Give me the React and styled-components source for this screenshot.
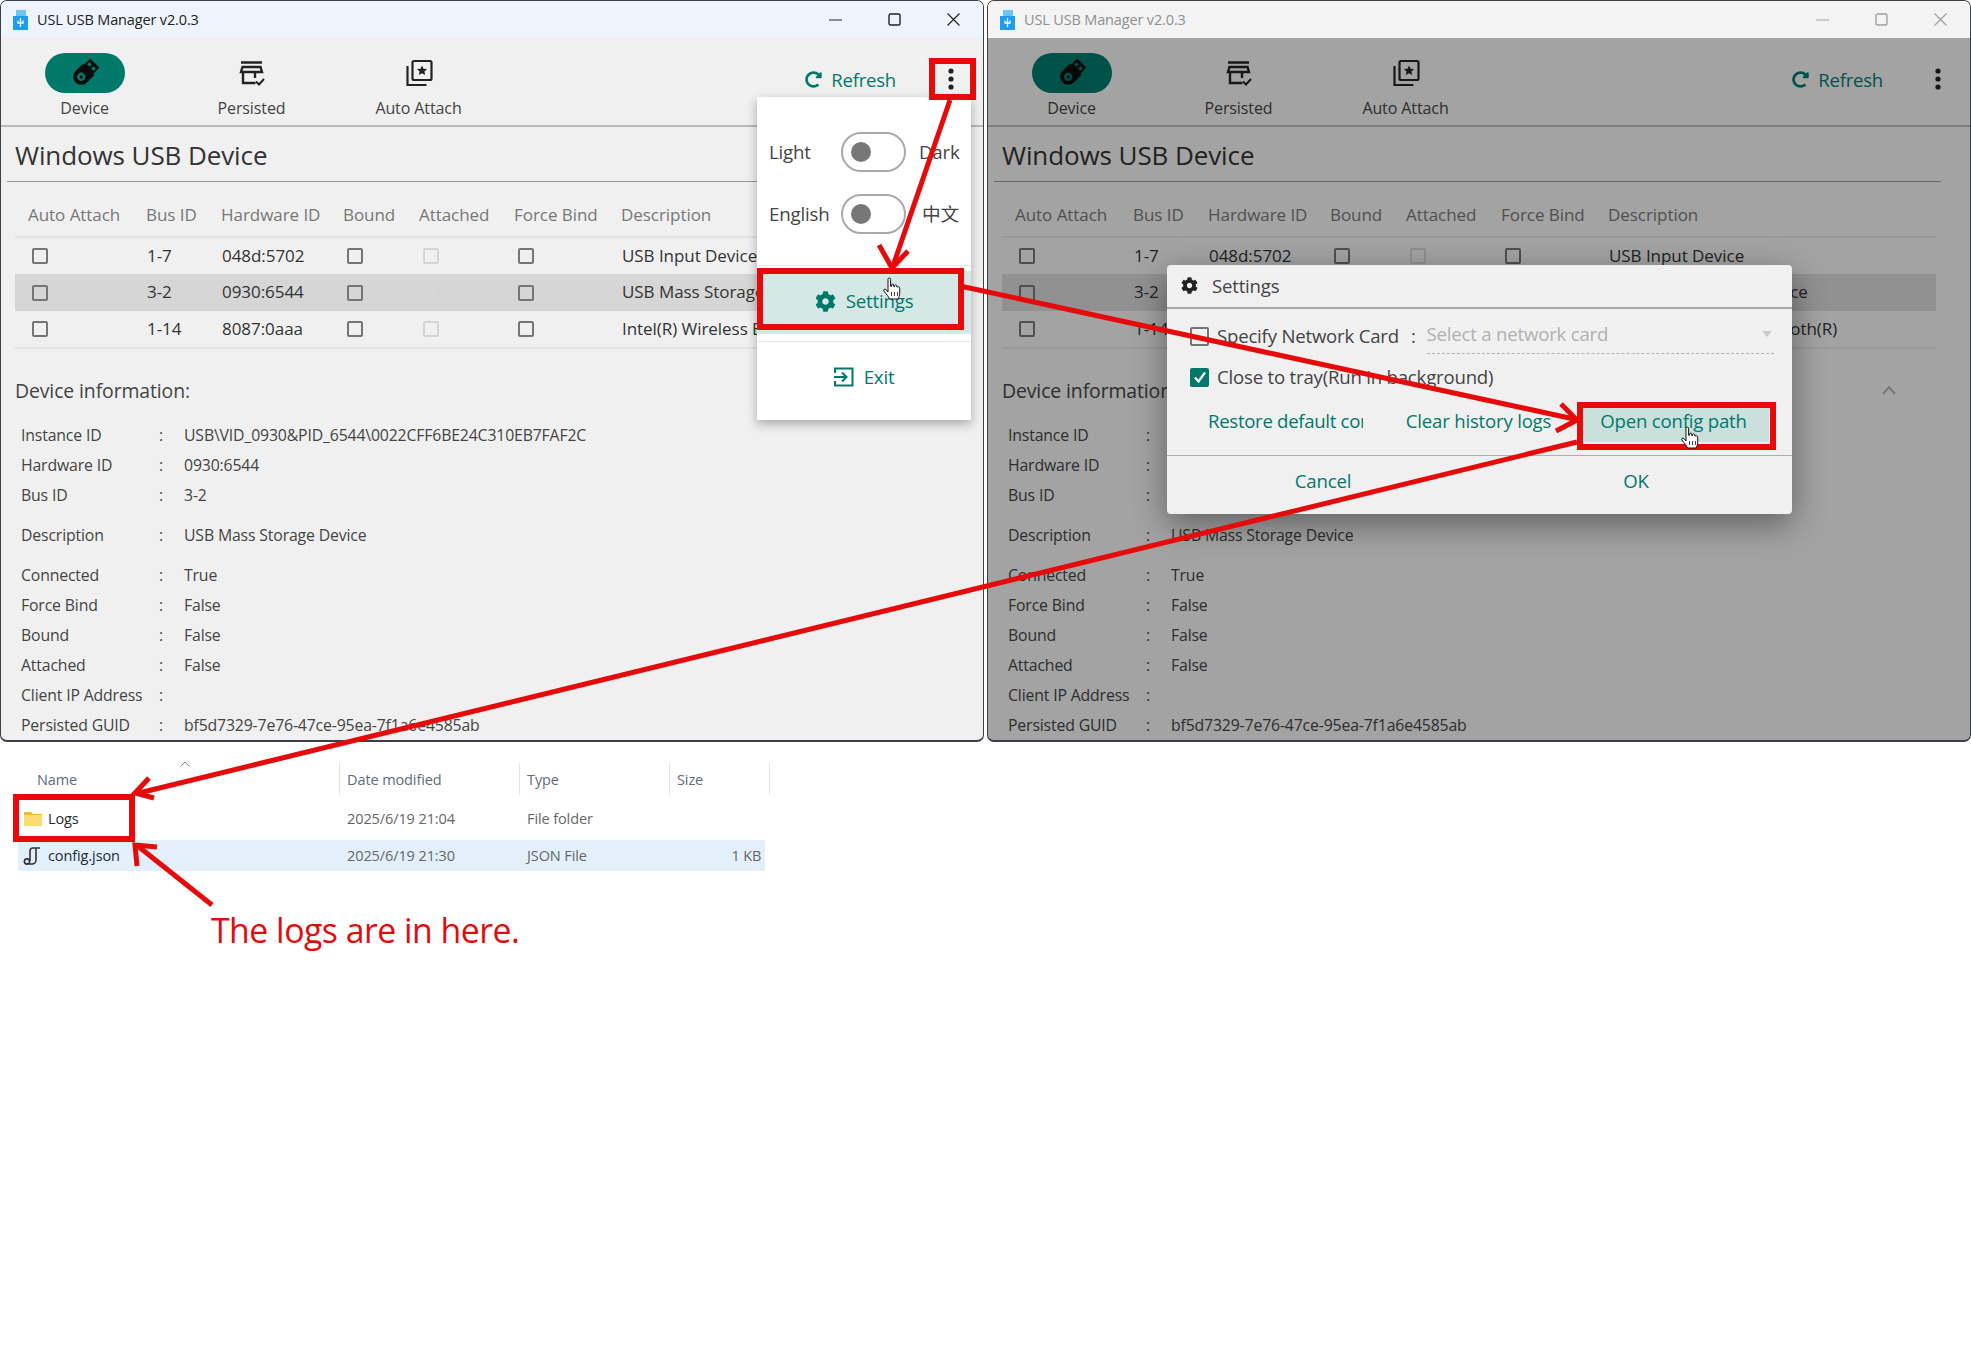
import React from 'react';
import styled, { createGlobalStyle } from 'styled-components';
import { FaCog, FaRedoAlt } from 'react-icons/fa';

const Global = createGlobalStyle`
  html, body { margin: 0; padding: 0; background: #fff; }
  body { font-family: "Open Sans", "Noto Sans CJK SC", sans-serif; color: #333; }
  * { box-sizing: border-box; }
`;

const TEAL = '#00796b';

const Page = styled.div`
  position: relative;
  width: 1971px;
  height: 1354px;
  overflow: hidden;
  background: #fff;
`;
const TopRow = styled.div`
  display: flex;
  gap: 3px;
  height: 742px;
`;
const Win = styled.section`
  position: relative;
  width: 984px;
  height: 742px;
  background: #f0f0f0;
  border: solid #3c3f46;
  border-width: 1px 1px 2px 1px;
  border-radius: 7px;
  overflow: hidden;
  flex: none;
`;
const TitleBar = styled.header`
  display: flex;
  align-items: center;
  height: 37px;
  padding-left: 12px;
  background: ${p => (p.$inactive ? '#f3f3f3' : '#eff3fb')};
  color: ${p => (p.$inactive ? '#8f8f8f' : '#222')};
  font-size: 14.5px;
  letter-spacing: -0.15px;
`;
const AppTitle = styled.span`
  margin-left: 8px;
`;
const WinButtons = styled.div`
  margin-left: auto;
  display: flex;
  color: ${p => (p.$inactive ? '#a0a0a0' : '#222')};
`;
const WinButton = styled.span`
  display: flex;
  align-items: center;
  justify-content: center;
  width: 59px;
  height: 37px;
`;
const Toolbar = styled.nav`
  display: flex;
  height: 89px;
  border-bottom: 2px solid #b9b9b9;
  position: relative;
`;
const NavItem = styled.div`
  width: 167px;
  display: flex;
  flex-direction: column;
  align-items: center;
  padding-top: 15px;
  font-size: 16px;
  color: #444;
  letter-spacing: -0.1px;
`;
const NavIcon = styled.span`
  display: flex;
  align-items: center;
  justify-content: center;
  width: 80px;
  height: 40px;
  border-radius: 20px;
  background: ${p => (p.$active ? TEAL : 'transparent')};
  margin-bottom: 4px;
`;
const ToolEnd = styled.div`
  margin-left: auto;
  display: flex;
  align-items: center;
  padding: 0 29px 5px 0;
  color: ${TEAL};
  font-size: 18.5px;
  letter-spacing: -0.2px;
`;
const RefreshLabel = styled.span`
  margin: 0 52px 0 9px;
`;
const Heading = styled.h1`
  margin: 0 29px 0 6px;
  padding: 0 0 9px 8px;
  height: 55px;
  display: flex;
  align-items: flex-end;
  font-size: 26px;
  font-weight: 400;
  line-height: 34px;
  color: #333;
  letter-spacing: -0.1px;
  border-bottom: 1px solid #999;
`;
const Table = styled.div`
  margin: 0 34px 0 14px;
  font-size: 17px;
  letter-spacing: -0.05px;
`;
const columns = '118px 75px 122px 76px 95px 107px 1fr';
const HeadRow = styled.div`
  display: grid;
  grid-template-columns: ${columns};
  height: 56px;
  padding-top: 14px;
  align-items: center;
  color: #777;
  border-bottom: 2px solid #e3e3e3;
`;
const HeadCell = styled.div`
  padding-left: 13px;
  height: 34px;
  white-space: nowrap;
  line-height: 32px;
`;
const Row = styled.div`
  display: grid;
  grid-template-columns: ${columns};
  height: ${p => p.$h}px;
  align-items: center;
  color: #333;
  background: ${p => (p.$selected ? '#d6d6d6' : 'transparent')};
  border-bottom: ${p => (p.$last ? '2px solid #e3e3e3' : 'none')};
`;
const Cell = styled.div`
  padding-left: ${p => (p.$box ? 17 : 14)}px;
  padding-bottom: ${p => (p.$box ? 0 : 2)}px;
  white-space: nowrap;
  display: flex;
  align-items: center;
`;
const Box = styled.span`
  display: block;
  flex: none;
  width: ${p => p.$size || 16}px;
  height: ${p => p.$size || 16}px;
  border-radius: 2px;
  border: 2px solid ${p => (p.$disabled ? '#d4d4d4' : '#757575')};
`;
const CheckedBox = styled.span`
  display: flex;
  align-items: center;
  justify-content: center;
  width: 19px;
  height: 19px;
  border-radius: 2px;
  background: ${TEAL};
  flex: none;
`;
const InfoTitle = styled.h2`
  margin: 29px 0 0 14px;
  font-size: 19.4px;
  line-height: 26px;
  font-weight: 400;
  color: #444;
  letter-spacing: -0.1px;
`;
const InfoList = styled.div`
  margin: 16px 0 0 20px;
  font-size: 15.8px;
  letter-spacing: -0.15px;
  color: #444;
`;
const InfoRow = styled.div`
  display: grid;
  grid-template-columns: 138px 25px 1fr;
  height: 30px;
  margin-top: ${p => (p.$gap ? 10 : 0)}px;
  align-items: center;
  white-space: nowrap;
`;
const Dim = styled.div`
  position: absolute;
  inset: 37px 0 0 0;
  background: rgba(0, 0, 0, 0.32);
`;
const Chevron = styled.span`
  position: absolute;
  left: 894px;
  top: 380px;
  display: flex;
  color: #777;
`;

const Menu = styled.div`
  position: absolute;
  left: 756px;
  top: 96px;
  width: 214px;
  height: 323px;
  background: #fff;
  box-shadow: 0 4px 10px rgba(0, 0, 0, 0.3);
  color: #444;
  font-size: 18.7px;
  letter-spacing: -0.2px;
`;
const ToggleRow = styled.div`
  display: grid;
  grid-template-columns: 72px 65px 1fr;
  align-items: center;
  height: 40px;
  margin-top: ${p => p.$top}px;
  padding-left: 12px;
  line-height: 34px;
`;
const Track = styled.span`
  display: block;
  position: relative;
  width: 65px;
  height: 40px;
  border: 2px solid #aaa;
  border-radius: 20px;
  background: #fff;
`;
const Knob = styled.span`
  position: absolute;
  left: 8px;
  top: 8px;
  width: 20px;
  height: 20px;
  border-radius: 50%;
  background: #777;
`;
const ToggleEnd = styled.span`
  padding-left: ${p => p.$pad}px;
`;
const MenuDivider = styled.div`
  height: 1px;
  background: #e6e6e6;
  margin-top: ${p => p.$top}px;
`;
const MenuAction = styled.div`
  display: flex;
  align-items: center;
  justify-content: center;
  gap: 10px;
  height: ${p => p.$h}px;
  margin-top: ${p => p.$top}px;
  color: ${TEAL};
  background: ${p => (p.$active ? '#d5e8e5' : 'transparent')};
  line-height: 22px;
  padding-bottom: ${p => p.$pb || 0}px;
`;

const Dialog = styled.div`
  position: absolute;
  left: 179px;
  top: 264px;
  width: 625px;
  height: 249px;
  background: #f0f0f0;
  border-radius: 4px;
  box-shadow: 0 10px 34px rgba(0, 0, 0, 0.42);
  font-size: 18.6px;
  letter-spacing: -0.2px;
  color: #444;
`;
const DialogHead = styled.div`
  display: flex;
  align-items: center;
  gap: 14px;
  height: 44px;
  padding: 0 0 1px 14px;
  border-bottom: 2px solid #a8a8a8;
  color: #444;
`;
const OptRow = styled.div`
  display: flex;
  align-items: center;
  height: 32px;
  margin-top: ${p => p.$top}px;
  padding-left: 23px;
  gap: 8px;
  white-space: nowrap;
  line-height: 28px;
`;
const Colon = styled.span`
  margin-left: 4px;
`;
const SelectBox = styled.span`
  display: flex;
  align-items: center;
  justify-content: space-between;
  margin: 2px 0 0 3px;
  width: 347px;
  height: 34px;
  padding-bottom: 5px;
  color: #b0b0b0;
  border-bottom: 1px dashed #b5b5b5;
`;
const Caret = styled.span`
  width: 0;
  height: 0;
  margin-right: 2px;
  border: 5px solid transparent;
  border-top: 6px solid #c9c9c9;
  border-bottom: 0;
`;
const ActionRow = styled.div`
  display: flex;
  height: 38px;
  margin-top: 11px;
  padding-left: 41px;
  color: ${TEAL};
  line-height: 33px;
`;
const ActionBtn = styled.span`
  display: flex;
  align-items: flex-start;
  width: ${p => p.$w}px;
  margin-left: ${p => p.$ml}px;
  height: 38px;
  overflow: hidden;
  white-space: nowrap;
  letter-spacing: ${p => (p.$clip ? -0.3 : -0.2)}px;
  justify-content: ${p => (p.$clip ? 'flex-start' : 'center')};
  background: ${p => (p.$active ? '#c9e0dc' : 'transparent')};
`;
const DialogFoot = styled.div`
  display: flex;
  height: 59px;
  margin-top: 13px;
  border-top: 1px solid #b0b0b0;
  color: ${TEAL};
`;
const FootBtn = styled.span`
  display: flex;
  align-items: center;
  justify-content: center;
  height: 49px;
  width: ${p => p.$w}px;
  margin-left: ${p => p.$ml}px;
`;

const Explorer = styled.div`
  padding: 21px 0 0 14px;
  font-size: 14.5px;
  letter-spacing: -0.1px;
  color: #555;
`;
const ExplorerHead = styled.div`
  position: relative;
  display: grid;
  grid-template-columns: 326px 180px 150px 100px;
  height: 32px;
  width: 756px;
`;
const SortCaret = styled.span`
  position: absolute;
  left: 165px;
  top: -3px;
  display: flex;
  color: #888;
`;
const ExplorerHeadCell = styled.div`
  display: flex;
  align-items: center;
  padding-left: ${p => p.$pad}px;
  border-right: 1px solid #e5e5e5;
  color: #5f6b7a;
`;
const FileRow = styled.div`
  display: grid;
  grid-template-columns: 325px 180px 120px 122px;
  align-items: center;
  height: ${p => p.$h}px;
  width: 747px;
  margin-left: 4px;
  padding-top: ${p => p.$pt || 0}px;
  background: ${p => (p.$selected ? '#e3f0fb' : 'transparent')};
  border-radius: 2px;
`;
const FileName = styled.div`
  display: flex;
  align-items: center;
  gap: 5px;
  padding-left: 5px;
  color: #1f2a33;
`;
const FileCell = styled.div`
  padding-left: 4px;
  color: #666;
  text-align: ${p => (p.$right ? 'right' : 'left')};
  white-space: nowrap;
`;
const Caption = styled.p`
  margin: 37px 0 0 197px;
  font-size: 33.8px;
  line-height: 44px;
  letter-spacing: -0.5px;
  color: #e30b0b;
`;

const RedBox = styled.div`
  position: absolute;
  left: ${p => p.$x}px;
  top: ${p => p.$y}px;
  width: ${p => p.$w}px;
  height: ${p => p.$h}px;
  border: 6px solid #e60a0a;
`;
const Arrows = styled.svg`
  position: absolute;
  inset: 0;
  pointer-events: none;
`;
const Cursor = styled.svg`
  position: absolute;
  left: ${p => p.$x}px;
  top: ${p => p.$y}px;
`;

const UsbIcon = () => (
  <svg width="32" height="32" viewBox="0 0 30 30">
    <g transform="rotate(-45 15 15)" fill="#0c0c0c">
      <path d="M10 7.500h10v15H10a7.500 7.500 0 0 1 0-15z" />
      <rect x="19" y="9" width="9" height="12" rx="0.800" />
      <circle cx="10" cy="15" r="3.800" fill={TEAL} />
      <circle cx="10" cy="15" r="1.500" fill="#0c0c0c" />
      <rect x="22" y="10.800" width="3.200" height="3" fill={TEAL} />
      <rect x="22" y="16.200" width="3.200" height="3" fill={TEAL} />
    </g>
  </svg>
);
const PersistedIcon = () => (
  <svg width="30" height="30" viewBox="0 0 30 30" fill="none" stroke="#222" strokeWidth="2.400">
    <path d="M4 4.500h21" />
    <path d="M5.500 9h18l1.500 5H4z" />
    <path d="M6 14v11h12.500M18 14v6" />
    <path d="M19 23.500l3 3 5-5.500" strokeWidth="2" />
  </svg>
);
const AutoAttachIcon = () => (
  <svg width="30" height="30" viewBox="0 0 30 30" fill="none" stroke="#222" strokeWidth="2.200">
    <rect x="8.500" y="3" width="19" height="19" rx="1.500" />
    <path d="M3.500 8v19h19" />
    <path d="M18 7.400l1.500 3.300 3.600.4-2.700 2.400.8 3.500-3.200-1.800-3.200 1.800.8-3.500-2.700-2.400 3.600-.4z" fill="#222" stroke="none" />
  </svg>
);
const Logo = () => (
  <svg width="16" height="20" viewBox="0 0 16 20">
    <rect x="3" y="0" width="10" height="6" fill="#6cc4f7" />
    <rect x="0" y="6" width="15" height="14" fill="#1e9cf0" />
    <path d="M7.500 8v9M5 10.500v2.500h5V10.500" stroke="#fff" strokeWidth="1.300" fill="none" />
  </svg>
);
const Dots = ({ c = '#222' }) => (
  <svg width="6" height="22" viewBox="0 0 6 22" fill={c}>
    <circle cx="3" cy="3" r="2.600" />
    <circle cx="3" cy="11" r="2.600" />
    <circle cx="3" cy="19" r="2.600" />
  </svg>
);
const ExitIcon = () => (
  <svg width="20" height="20" viewBox="0 0 20 20" fill="none" stroke={TEAL} strokeWidth="2">
    <path d="M1 6V1.500h17.500v17H1V14" />
    <path d="M0 10h12M8 5.500l4.500 4.500L8 14.500" />
  </svg>
);
const Tick = () => (
  <svg width="14" height="14" viewBox="0 0 14 14" fill="none" stroke="#fff" strokeWidth="2.200">
    <path d="M2 7.500l3.500 4L12 2.500" />
  </svg>
);
const Hand = ({ x, y }) => (
  <Cursor $x={x} $y={y} width="20" height="26" viewBox="0 0 20 26" fill="#fff" stroke="#111" strokeWidth="1">
    <path d="M6 2.200c0-1.600 2.600-1.600 2.600 0v7l1 .1V8c0-1.200 2.200-1.200 2.200 0v1.600l.8.1v-1c0-1.200 2.200-1.200 2.200.1v1.200l.6.1c1-.8 2.300-.2 2.300 1v5.500c0 2.500-1 3.400-1.600 5.400H7.500c-.8-2.500-3.300-4.600-5.600-8-.8-1.300.8-2.600 2-1.500L6 15z" />
    <path d="M9.500 15v4M12.500 15v4M15.500 15v4" strokeWidth=".8" />
  </Cursor>
);

const devices = [
  ['1-7', '048d:5702', 'USB Input Device', 36],
  ['3-2', '0930:6544', 'USB Mass Storage Device', 37],
  ['1-14', '8087:0aaa', 'Intel(R) Wireless Bluetooth(R)', 38],
];
const info = [
  ['Instance ID', 'USB\\VID_0930&PID_6544\\0022CFF6BE24C310EB7FAF2C'],
  ['Hardware ID', '0930:6544'],
  ['Bus ID', '3-2'],
  ['Description', 'USB Mass Storage Device', true],
  ['Connected', 'True', true],
  ['Force Bind', 'False'],
  ['Bound', 'False'],
  ['Attached', 'False'],
  ['Client IP Address', ''],
  ['Persisted GUID', 'bf5d7329-7e76-47ce-95ea-7f1a6e4585ab'],
];

const WindowFrame = ({ inactive, children }) => (
  <Win>
    <TitleBar $inactive={inactive}>
      <Logo />
      <AppTitle>USL USB Manager v2.0.3</AppTitle>
      <WinButtons $inactive={inactive}>
        <WinButton>
          <svg width="13" height="13" viewBox="0 0 13 13" stroke="currentColor" strokeWidth="1.200"><path d="M0 7h13" /></svg>
        </WinButton>
        <WinButton>
          <svg width="13" height="13" viewBox="0 0 13 13" stroke="currentColor" strokeWidth="1.400" fill="none"><rect x="1" y="1" width="11" height="11" rx="1.500" /></svg>
        </WinButton>
        <WinButton>
          <svg width="13" height="13" viewBox="0 0 13 13" stroke="currentColor" strokeWidth="1.200"><path d="M.5.500l12 12M12.500.500l-12 12" /></svg>
        </WinButton>
      </WinButtons>
    </TitleBar>
    <Toolbar>
      <NavItem>
        <NavIcon $active><UsbIcon /></NavIcon>
        Device
      </NavItem>
      <NavItem>
        <NavIcon><PersistedIcon /></NavIcon>
        Persisted
      </NavItem>
      <NavItem>
        <NavIcon><AutoAttachIcon /></NavIcon>
        Auto Attach
      </NavItem>
      <ToolEnd>
        <FaRedoAlt size={17} />
        <RefreshLabel>Refresh</RefreshLabel>
        <Dots />
      </ToolEnd>
    </Toolbar>
    <Heading>Windows USB Device</Heading>
    <Table>
      <HeadRow>
        {['Auto Attach', 'Bus ID', 'Hardware ID', 'Bound', 'Attached', 'Force Bind', 'Description'].map(h => (
          <HeadCell key={h}>{h}</HeadCell>
        ))}
      </HeadRow>
      {devices.map(([bus, hw, desc, h], i) => (
        <Row key={bus} $h={h} $selected={i === 1} $last={i === 2}>
          <Cell $box><Box /></Cell>
          <Cell>{bus}</Cell>
          <Cell>{hw}</Cell>
          <Cell $box><Box /></Cell>
          <Cell $box><Box $disabled /></Cell>
          <Cell $box><Box /></Cell>
          <Cell>{desc}</Cell>
        </Row>
      ))}
    </Table>
    <InfoTitle>Device information:</InfoTitle>
    <InfoList>
      {info.map(([k, v, gap]) => (
        <InfoRow key={k} $gap={gap}>
          <span>{k}</span>
          <span>:</span>
          <span>{v}</span>
        </InfoRow>
      ))}
    </InfoList>
    {children}
  </Win>
);

export default function App() {
  return (
    <Page>
      <Global />
      <TopRow>
        <WindowFrame>
          <Menu>
            <ToggleRow $top={35}>
              <span>Light</span>
              <Track><Knob /></Track>
              <ToggleEnd $pad={13}>Dark</ToggleEnd>
            </ToggleRow>
            <ToggleRow $top={22}>
              <span>English</span>
              <Track><Knob /></Track>
              <ToggleEnd $pad={16}>中文</ToggleEnd>
            </ToggleRow>
            <MenuDivider $top={31} />
            <MenuAction $active $h={63} $top={5} $pb={3}>
              <FaCog size={21} />
              Settings
            </MenuAction>
            <MenuDivider $top={7} />
            <MenuAction $h={73} $top={0} $pb={3}>
              <ExitIcon />
              Exit
            </MenuAction>
          </Menu>
        </WindowFrame>
        <WindowFrame inactive>
          <Dim />
          <Chevron>
            <svg width="14" height="18" viewBox="0 0 14 18" fill="none" stroke="currentColor" strokeWidth="2"><path d="M1 13l6-7 6 7" /></svg>
          </Chevron>
          <Dialog>
            <DialogHead>
              <FaCog size={17} color="#222" />
              Settings
            </DialogHead>
            <OptRow $top={11}>
              <Box $size={19} />
              <span>Specify Network Card</span>
              <Colon>:</Colon>
              <SelectBox>
                Select a network card
                <Caret />
              </SelectBox>
            </OptRow>
            <OptRow $top={9}>
              <CheckedBox><Tick /></CheckedBox>
              <span>Close to tray(Run in background)</span>
            </OptRow>
            <ActionRow>
              <ActionBtn $w={155} $ml={0} $clip>Restore default configuration</ActionBtn>
              <ActionBtn $w={155} $ml={38}>Clear history logs</ActionBtn>
              <ActionBtn $w={191} $ml={22} $active>Open config path</ActionBtn>
            </ActionRow>
            <DialogFoot>
              <FootBtn $w={200} $ml={56}>Cancel</FootBtn>
              <FootBtn $w={200} $ml={113}>OK</FootBtn>
            </DialogFoot>
          </Dialog>
        </WindowFrame>
      </TopRow>
      <Explorer>
        <ExplorerHead>
          <SortCaret>
            <svg width="12" height="8" viewBox="0 0 12 8" fill="none" stroke="currentColor"><path d="M1.500 6.500L6 2l4.500 4.500" /></svg>
          </SortCaret>
          <ExplorerHeadCell $pad={23}>Name</ExplorerHeadCell>
          <ExplorerHeadCell $pad={7}>Date modified</ExplorerHeadCell>
          <ExplorerHeadCell $pad={7}>Type</ExplorerHeadCell>
          <ExplorerHeadCell $pad={7}>Size</ExplorerHeadCell>
        </ExplorerHead>
        <FileRow $h={45} $pt={2}>
          <FileName>
            <svg width="20" height="18" viewBox="0 0 20 18">
              <path d="M1 2h7l2 2h9v12H1z" fill="#f4b92c" />
              <rect x="1" y="5" width="18" height="11" rx="1" fill="#fddc6e" />
            </svg>
            Logs
          </FileName>
          <FileCell>2025/6/19 21:04</FileCell>
          <FileCell>File folder</FileCell>
          <FileCell />
        </FileRow>
        <FileRow $h={31} $selected>
          <FileName>
            <svg width="20" height="20" viewBox="0 0 20 20" fill="none" stroke="#333" strokeWidth="1.600">
              <path d="M7 15V5a3 3 0 0 1 3-3h7M13 2v12a4 4 0 0 1-4 4H6" />
              <circle cx="4" cy="15.500" r="2.600" />
            </svg>
            config.json
          </FileName>
          <FileCell>2025/6/19 21:30</FileCell>
          <FileCell>JSON File</FileCell>
          <FileCell $right>1 KB&nbsp;</FileCell>
        </FileRow>
        <Caption>The logs are in here.</Caption>
      </Explorer>

      <RedBox $x={929} $y={58} $w={47} $h={42} />
      <RedBox $x={757} $y={268} $w={207} $h={62} />
      <RedBox $x={1577} $y={402} $w={199} $h={48} />
      <RedBox $x={13} $y={794} $w={122} $h={48} />
      <Hand x={882} y={277} />
      <Hand x={1680} y={426} />
      <Arrows width="1971" height="1354" fill="none" stroke="#e60a0a" strokeWidth="5">
        <path d="M950 100L893 266" />
        <path d="M879 245L892 268L908 251" />
        <path d="M960 286L1574 419" />
        <path d="M1561 404L1577 420L1556 431" />
        <path d="M1577 442L139 793" />
        <path d="M149 778L135 793L154 798" />
        <path d="M212 905L139 847" />
        <path d="M137 866L135 845L157 847" />
      </Arrows>
    </Page>
  );
}
